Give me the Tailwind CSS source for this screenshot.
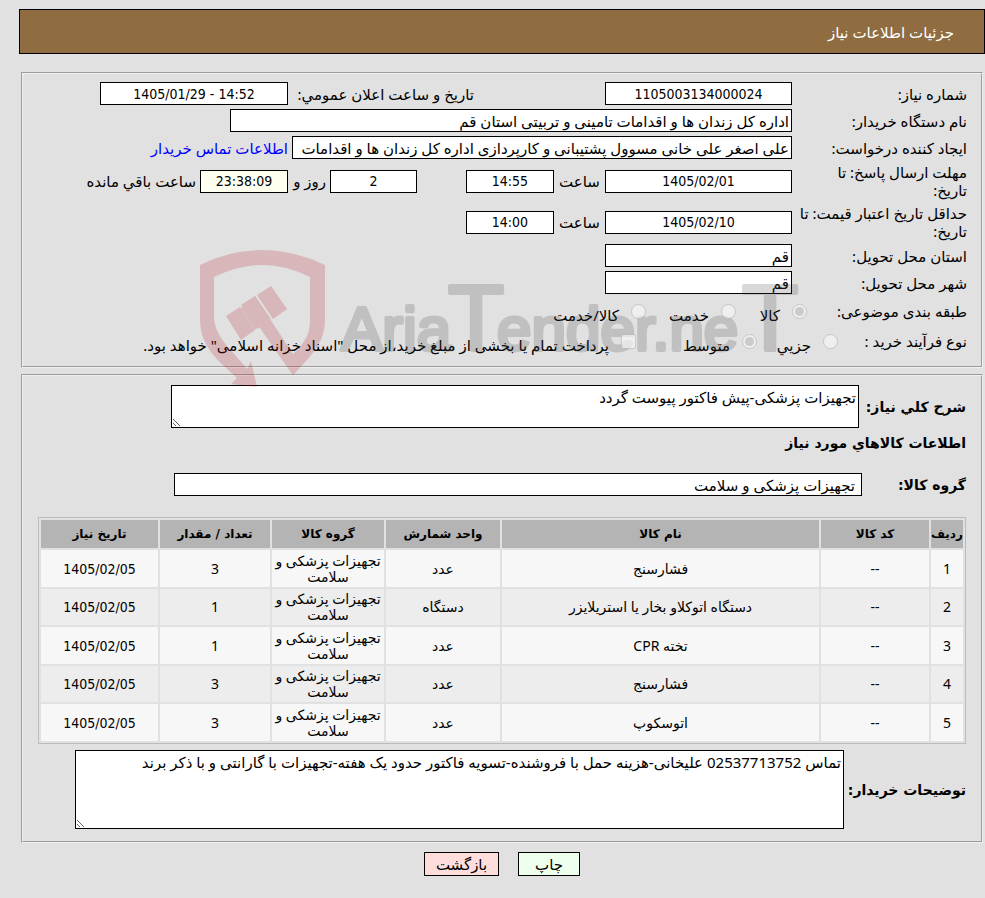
<!DOCTYPE html>
<html lang="fa" dir="rtl">
<head>
<meta charset="utf-8">
<meta name="viewport" content="width=device-width, initial-scale=1">
<title>جزئیات اطلاعات نیاز</title>
<script src="https://cdn.jsdelivr.net/npm/@tailwindcss/browser@4"></script>
</head>
<body class="relative min-h-screen bg-[#e1e1e1] pl-[19px] pt-[9px] pb-5 font-['Noto_Sans','DejaVu_Sans',sans-serif] text-[15px] leading-[18px] text-black">
<header class="flex h-[45px] items-center border border-black bg-[#8f6d40] pr-[30px]">
  <h1 class="text-[15px] text-white">جزئیات اطلاعات نیاز</h1>
</header>

<form>
<fieldset class="mt-[18px] mr-[2px] ml-[2px] flex flex-col gap-1 border-2 border-[#f0f0f0] [border-style:groove] pt-2 pr-[14px] pb-3 pl-4">
  <div class="flex items-center">
    <label for="num" class="w-[175px] shrink-0">شماره نیاز:</label>
    <input id="num" readonly value="1105003134000024" class="h-[23px] w-[187px] border border-black bg-white px-0.5 text-center font-['DejaVu_Sans_Condensed','DejaVu_Sans',sans-serif] text-[14px]">
    <label for="pub" class="mr-[131px] w-[186px] shrink-0 whitespace-nowrap">تاريخ و ساعت اعلان عمومي:</label>
    <input id="pub" readonly dir="ltr" value="1405/01/29 - 14:52" class="h-[23px] w-[188px] border border-black bg-white px-0.5 text-center font-['DejaVu_Sans_Condensed','DejaVu_Sans',sans-serif] text-[14px]">
  </div>
  <div class="flex items-center">
    <label for="org" class="w-[175px] shrink-0">نام دستگاه خریدار:</label>
    <input id="org" readonly value="اداره کل زندان ها و اقدامات تامینی و تربیتی استان قم" class="h-[23px] w-[562px] border border-black bg-white px-0.5">
  </div>
  <div class="flex items-center">
    <label for="creator" class="w-[175px] shrink-0">ایجاد کننده درخواست:</label>
    <input id="creator" readonly value="علی اصغر علی خانی مسوول پشتیبانی و کارپردازی اداره کل زندان ها و اقدامات" class="h-[23px] w-[500px] border border-black bg-white px-0.5">
    <a href="#" class="mr-1 whitespace-nowrap text-[#0000ff]">اطلاعات تماس خریدار</a>
  </div>
  <div class="flex items-center">
    <label for="d1" class="w-[175px] shrink-0">مهلت ارسال پاسخ: تا<br>تاریخ:</label>
    <input id="d1" readonly dir="ltr" value="1405/02/01" class="h-[23px] w-[187px] border border-black bg-white px-0.5 text-center font-['DejaVu_Sans_Condensed','DejaVu_Sans',sans-serif] text-[14px]">
    <label for="t1" class="w-[51px] shrink-0 text-center">ساعت</label>
    <input id="t1" readonly value="14:55" class="h-[23px] w-[88px] border border-black bg-white px-0.5 text-center font-['DejaVu_Sans_Condensed','DejaVu_Sans',sans-serif] text-[14px]">
    <input id="days" readonly value="2" class="mr-[49px] h-[23px] w-[87px] border border-black bg-white px-0.5 text-center font-['DejaVu_Sans_Condensed','DejaVu_Sans',sans-serif] text-[14px]">
    <label for="days" class="w-[42px] shrink-0 pr-1">روز و</label>
    <input id="left" readonly value="23:38:09" class="h-[23px] w-[88px] border border-black bg-[#fffff0] px-0.5 text-center font-['DejaVu_Sans_Condensed','DejaVu_Sans',sans-serif] text-[14px]">
    <label for="left" class="pr-1 whitespace-nowrap">ساعت باقي مانده</label>
  </div>
  <div class="mt-px flex items-center">
    <label for="d2" class="w-[175px] shrink-0 whitespace-nowrap">حداقل تاریخ اعتبار قیمت: تا<br>تاریخ:</label>
    <input id="d2" readonly dir="ltr" value="1405/02/10" class="h-[23px] w-[187px] border border-black bg-white px-0.5 text-center font-['DejaVu_Sans_Condensed','DejaVu_Sans',sans-serif] text-[14px]">
    <label for="t2" class="w-[51px] shrink-0 text-center">ساعت</label>
    <input id="t2" readonly value="14:00" class="h-[23px] w-[88px] border border-black bg-white px-0.5 text-center font-['DejaVu_Sans_Condensed','DejaVu_Sans',sans-serif] text-[14px]">
  </div>
  <div class="flex items-center">
    <label for="prov" class="w-[175px] shrink-0">استان محل تحویل:</label>
    <input id="prov" readonly value="قم" class="h-[23px] w-[187px] border border-black bg-white px-0.5">
  </div>
  <div class="flex items-center">
    <label for="city" class="w-[175px] shrink-0">شهر محل تحویل:</label>
    <input id="city" readonly value="قم" class="h-[23px] w-[187px] border border-black bg-white px-0.5">
  </div>
  <div class="flex h-[26px] items-center">
    <span class="w-[160px] shrink-0">طبقه بندی موضوعی:</span>
    <label class="flex h-[15px] w-[71px] items-start gap-3"><input type="radio" name="cat" disabled checked class="relative z-10 size-[15px]"><span class="mt-0.5">كالا</span></label>
    <label class="flex h-[15px] w-[90px] items-start gap-3"><input type="radio" name="cat" disabled class="relative z-10 size-[15px]"><span class="mt-0.5">خدمت</span></label>
    <label class="flex h-[15px] items-start gap-3"><input type="radio" name="cat" disabled class="relative z-10 size-[15px]"><span class="mt-0.5">کالا/خدمت</span></label>
  </div>
  <div class="flex h-[26px] items-center">
    <span class="w-[129px] shrink-0">نوع فرآیند خرید :</span>
    <label class="flex h-[15px] w-[81px] items-start gap-3"><input type="radio" name="proc" disabled class="relative z-10 size-[15px]"><span class="mt-0.5">جزيي</span></label>
    <label class="flex h-[15px] w-[121px] items-start gap-3"><input type="radio" name="proc" disabled checked class="relative z-10 size-[15px]"><span class="mt-0.5">متوسط</span></label>
    <label class="flex h-[15px] items-start gap-3 whitespace-nowrap"><input type="checkbox" disabled class="relative z-10 size-[15px]"><span class="mt-0.5">پرداخت تمام یا بخشی از مبلغ خرید،از محل "اسناد خزانه اسلامی" خواهد بود.</span></label>
  </div>
</fieldset>

<fieldset class="mt-[6px] mr-[2px] ml-[2px] border-2 border-[#f0f0f0] [border-style:groove] pt-[9px] pr-[15px] pb-3 pl-[15px]">
  <div class="flex items-center">
    <label for="desc" class="w-[107px] shrink-0 whitespace-nowrap font-['DejaVu_Sans',sans-serif] text-[14px] font-bold">شرح کلي نیاز:</label>
    <textarea id="desc" readonly class="h-[43px] w-[688px] border border-black bg-white p-0.5">تجهیزات پزشکی-پیش فاکتور پیوست گردد</textarea>
  </div>
  <h2 class="mt-[6px] font-['DejaVu_Sans',sans-serif] text-[14px] font-bold">اطلاعات کالاهاي مورد نیاز</h2>
  <div class="mt-[21px] flex items-center">
    <label for="group" class="w-[104px] shrink-0 font-['DejaVu_Sans',sans-serif] text-[14px] font-bold">گروه کالا:</label>
    <input id="group" readonly value="تجهیزات پزشکی و سلامت" class="h-[23px] w-[688px] border border-black bg-white px-1.5">
  </div>
  <table class="mt-[21px] w-full table-fixed border-separate border-spacing-[2px] border border-[#bcbcbc] text-center text-[14px] leading-[16px]">
    <colgroup><col class="w-[32px]"><col class="w-[108px]"><col><col class="w-[114px]"><col class="w-[112px]"><col class="w-[110px]"><col class="w-[117px]"></colgroup>
    <thead class="bg-[#b4b4b4] font-['DejaVu_Sans',sans-serif] text-[12px]">
      <tr class="h-[28px] whitespace-nowrap"><th><span class="-mx-1">ردیف</span></th><th>کد کالا</th><th>نام کالا</th><th>واحد شمارش</th><th>گروه کالا</th><th>تعداد / مقدار</th><th>تاریخ نیاز</th></tr>
    </thead>
    <tbody>
      <tr class="h-[37px] bg-[#f7f7f7]"><td>1</td><td>--</td><td>فشارسنج</td><td>عدد</td><td>تجهیزات پزشکی و سلامت</td><td>3</td><td class="font-['DejaVu_Sans_Condensed',sans-serif]">1405/02/05</td></tr>
      <tr class="h-[36px] bg-[#ededed]"><td>2</td><td>--</td><td>دستگاه اتوکلاو بخار یا استریلایزر</td><td>دستگاه</td><td>تجهیزات پزشکی و سلامت</td><td>1</td><td class="font-['DejaVu_Sans_Condensed',sans-serif]">1405/02/05</td></tr>
      <tr class="h-[37px] bg-[#f7f7f7]"><td>3</td><td>--</td><td>تخته CPR</td><td>عدد</td><td>تجهیزات پزشکی و سلامت</td><td>1</td><td class="font-['DejaVu_Sans_Condensed',sans-serif]">1405/02/05</td></tr>
      <tr class="h-[36px] bg-[#ededed]"><td>4</td><td>--</td><td>فشارسنج</td><td>عدد</td><td>تجهیزات پزشکی و سلامت</td><td>3</td><td class="font-['DejaVu_Sans_Condensed',sans-serif]">1405/02/05</td></tr>
      <tr class="h-[37px] bg-[#f7f7f7]"><td>5</td><td>--</td><td>اتوسکوپ</td><td>عدد</td><td>تجهیزات پزشکی و سلامت</td><td>3</td><td class="font-['DejaVu_Sans_Condensed',sans-serif]">1405/02/05</td></tr>
    </tbody>
  </table>
  <div class="mt-[6px] flex items-center">
    <label for="notes" class="w-[122px] shrink-0 whitespace-nowrap font-['DejaVu_Sans',sans-serif] text-[14px] font-bold">توضیحات خریدار:</label>
    <textarea id="notes" readonly class="h-[79px] w-[769px] border border-black bg-white p-0.5">تماس 02537713752 علیخانی-هزینه حمل با فروشنده-تسویه فاکتور حدود یک هفته-تجهیزات با گارانتی و با ذکر برند</textarea>
  </div>
</fieldset>

<div class="mt-[9px] flex justify-center gap-[19px]">
  <button type="button" class="h-6 w-[62px] border border-black bg-[#eeffee]">چاپ</button>
  <button type="button" class="h-6 w-[75px] border border-black bg-[#ffdddd]">بازگشت</button>
</div>
</form>

<svg class="pointer-events-none absolute top-[240px] left-[190px] h-[150px] w-[620px]" viewBox="190 240 620 150" direction="ltr" aria-hidden="true">
  <g fill="#b4141e" opacity="0.2">
    <path d="M200 265 Q262 235 325 265 V319 C325 345 309 357 293 375.500 L258 325 L255 330 L241 308 L255 296 L270 319 L293 354 C302 345 310 337 310 321 V277 Q262 253 214 277 V319 C216 339 235 353 247 369 L251 361 L257 387 L231 384 L237 378 C225 366 200 350 200 320 Z"/>
    <path d="M226 316 L240 307 L255 330 L241 340 Z M241 305 L255 296 L271 319 L257 329 Z M257 295 L271 286 L287 309 L273 319 Z"/>
  </g>
  <g opacity="0.2" fill="#414141" stroke="#414141" stroke-width="4" stroke-linejoin="round" class="font-['Liberation_Sans',sans-serif]">
    <text x="341" y="350" class="text-[62px]">Aria</text>
    <text x="448" y="350" class="text-[92px]">T</text>
    <text x="497" y="350" class="text-[62px]">ender.ne</text>
    <text x="742" y="350" class="text-[92px]">T</text>
  </g>
</svg>
</body>
</html>
